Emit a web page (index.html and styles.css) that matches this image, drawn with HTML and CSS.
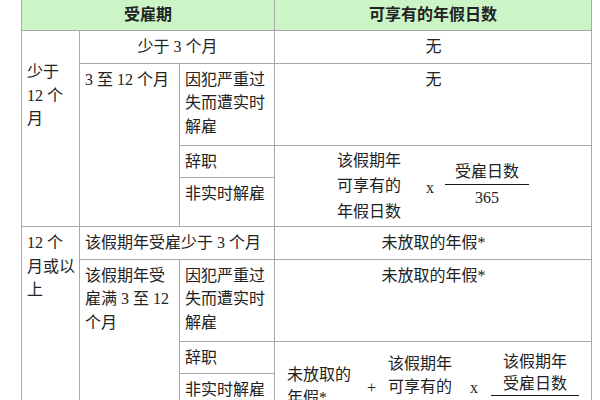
FILE: index.html
```html
<!DOCTYPE html>
<html lang="zh-CN">
<head>
<meta charset="utf-8">
<title>年假</title>
<link rel="stylesheet" href="styles.css">
</head>
<body>
<table class="leave">
  <colgroup><col class="c1"><col class="c2"><col class="c3"><col class="c4"></colgroup>
  <thead>
    <tr class="r-head"><th colspan="3">受雇期</th><th>可享有的年假日数</th></tr>
  </thead>
  <tbody>
    <tr class="r-one"><td rowspan="4" class="first-span">少于 12 个月</td><td colspan="2" class="center">少于 3 个月</td><td class="center">无</td></tr>
    <tr class="r-three"><td rowspan="3">3 至 12 个月</td><td>因犯严重过失而遭实时解雇</td><td class="center">无</td></tr>
    <tr class="r-one"><td>辞职</td>
      <td rowspan="2" class="formula-cell">
        <div class="formula f1">
          <div class="stack">该假期年<br>可享有的<br>年假日数</div>
          <span class="op times">x</span>
          <div class="frac"><div class="num">受雇日数</div><div class="den">365</div></div>
        </div>
      </td>
    </tr>
    <tr class="r-mid"><td>非实时解雇</td></tr>
    <tr class="r-one"><td rowspan="4">12 个月或以上</td><td colspan="2">该假期年受雇少于 3 个月</td><td class="center">未放取的年假*</td></tr>
    <tr class="r-three"><td rowspan="3">该假期年受雇满 3 至 12 个月</td><td>因犯严重过失而遭实时解雇</td><td class="center">未放取的年假*</td></tr>
    <tr class="r-one"><td>辞职</td>
      <td rowspan="2" class="formula-cell">
        <div class="formula f2">
          <div class="stack">未放取的<br>年假*</div>
          <span class="op plus">+</span>
          <div class="stack">该假期年<br>可享有的<br>年假日数</div>
          <span class="op times">x</span>
          <div class="frac"><div class="num">该假期年<br>受雇日数</div><div class="den">365</div></div>
        </div>
      </td>
    </tr>
    <tr class="r-last"><td>非实时解雇</td></tr>
  </tbody>
</table>
</body>
</html>
```
FILE: styles.css
```css
html, body {
  margin: 0;
  padding: 0;
  background: #fff;
  overflow: hidden;
}
body {
  font-family: "Liberation Serif", "Noto Sans CJK SC", serif;
  font-size: 16px;
  color: #222;
}
.leave {
  border-collapse: collapse;
  table-layout: fixed;
  width: 570px;
  margin: -1px 0 0 21px;
}
.c1 { width: 58px; }
.c2 { width: 100px; }
.c3 { width: 95px; }
.c4 { width: 317px; }

.leave th,
.leave td {
  border: 1px solid #a9a9a9;
  padding: 4px 4px 4px 5px;
  line-height: 23.5px;
  vertical-align: top;
  text-align: left;
  font-weight: normal;
}
.leave th {
  background: #cbf5c7;
  font-weight: bold;
  text-align: center;
  vertical-align: middle;
  padding: 0 4px;
}
.r-head { height: 31px; }
.r-one { height: 32px; }
.r-three { height: 82px; }
.r-mid { height: 49px; }
.r-last { height: 58px; }

.leave td.center { text-align: center; }
.leave td.first-span { padding-top: 29px; }
.leave td.formula-cell { vertical-align: middle; padding: 0; }

.formula {
  display: flex;
  align-items: center;
  justify-content: center;
}
.stack { white-space: nowrap; }
.f1 .stack { line-height: 25.5px; }
.f2 .stack { line-height: 23px; }
.op { line-height: 20px; }
.f1 .times { margin: 4px 11px 0 25px; }
.f2 .plus { margin: 4px 12px 0 16px; }
.f2 .times { margin: 4px 13px 0 18px; }

.frac {
  display: flex;
  flex-direction: column;
  align-items: stretch;
  text-align: center;
}
.num {
  border-bottom: 1px solid #1a1a1a;
  line-height: 24px;
  white-space: nowrap;
}
.f1 .num { padding: 0 10px; }
.f2 .num { padding: 0 12px; line-height: 22px; }
.den { line-height: 26px; }
```
